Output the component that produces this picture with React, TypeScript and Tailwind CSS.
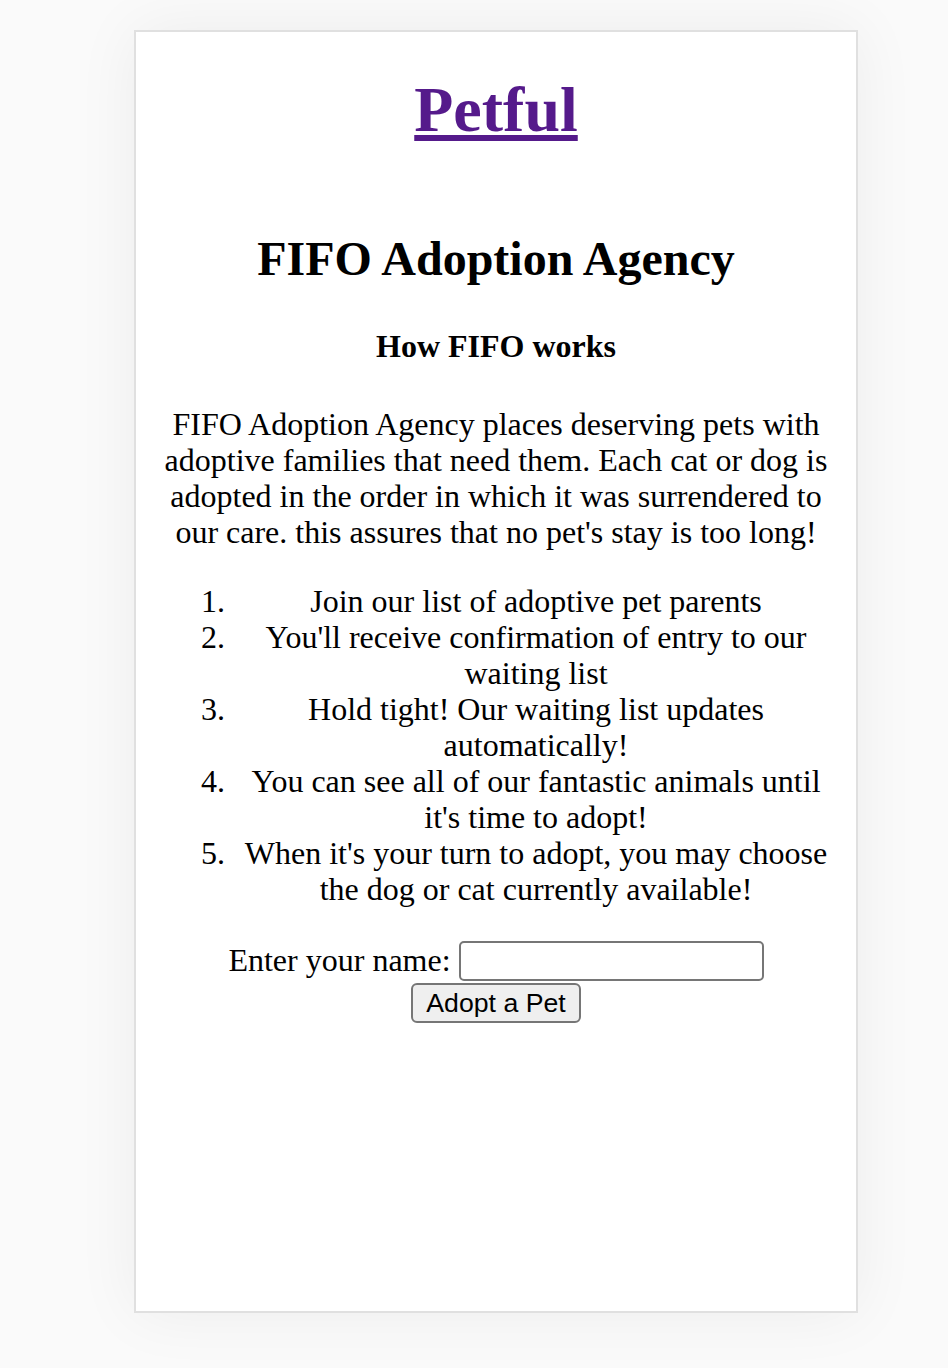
import React from "react";

const serif = "font-['Liberation_Serif','Times_New_Roman',serif]";

const steps = [
  "Join our list of adoptive pet parents",
  "You'll receive confirmation of entry to our waiting list",
  "Hold tight! Our waiting list updates automatically!",
  "You can see all of our fantastic animals until it's time to adopt!",
  "When it's your turn to adopt, you may choose the dog or cat currently available!",
];

export default function App() {
  return (
    <div className={`min-h-screen bg-[#fafafa] pt-[30px] pl-[134px] text-black ${serif}`}>
      <div className="flex h-[1283px] w-[724px] flex-col border-2 border-[#e0e0e0] bg-white px-[17px] text-center shadow-[0_0_60px_rgba(0,0,0,0.06)]">
        <h1 className="mt-[41px] text-[64px] font-bold leading-[74px]">
          <a href="#" className="text-[#551a8b] underline">
            Petful
          </a>
        </h1>

        <h2 className="mt-[84px] text-[48px] font-bold leading-[55px]">FIFO Adoption Agency</h2>

        <h3 className="mt-[42px] text-[32px] font-bold leading-[37px]">How FIFO works</h3>

        <p className="mt-[41px] text-[32px] leading-[36px]">
          FIFO Adoption Agency places deserving pets with adoptive families that need them. Each cat or dog
          is adopted in the order in which it was surrendered to our care. this assures that no pet's stay
          is too long!
        </p>

        <ol className="mt-[33px] list-outside list-decimal pl-[80px] text-[32px] leading-[36px]">
          {steps.map((s) => (
            <li key={s}>{s}</li>
          ))}
        </ol>

        <form className="mt-[34px] flex flex-col items-center gap-[2px]" onSubmit={(e) => e.preventDefault()}>
          <div className="flex items-center gap-[8px]">
            <label htmlFor="name" className="pb-[3px] text-[32px] leading-[36px]">
              Enter your name:
            </label>
            <input
              id="name"
              type="text"
              className="h-[40px] w-[305px] rounded-[5px] border-2 border-[#767676] bg-white px-1"
            />
          </div>
          <button
            type="submit"
            className="h-[40px] w-[170px] rounded-[6px] border-2 border-[#767676] bg-[#efefef] font-['Liberation_Sans',Arial,sans-serif] text-[26.67px] leading-none text-black"
          >
            Adopt a Pet
          </button>
        </form>
      </div>
    </div>
  );
}
